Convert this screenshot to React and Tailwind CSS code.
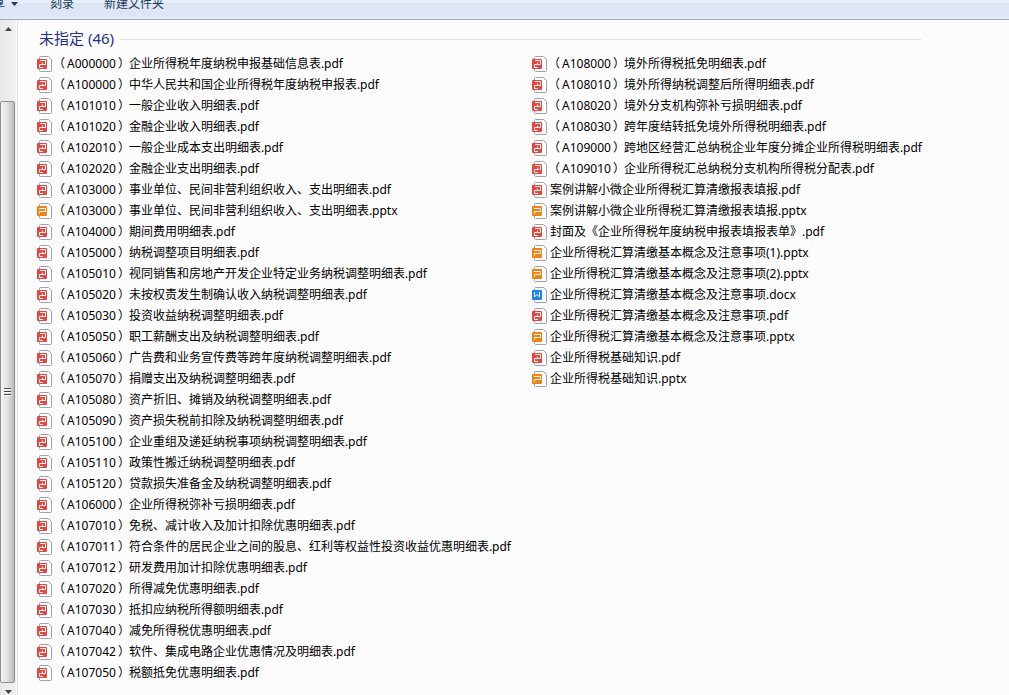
import { memo } from 'react'

const FILES = [
  { code: 'A000000', name: '企业所得税年度纳税申报基础信息表.pdf' },
  { code: 'A100000', name: '中华人民共和国企业所得税年度纳税申报表.pdf' },
  { code: 'A101010', name: '一般企业收入明细表.pdf' },
  { code: 'A101020', name: '金融企业收入明细表.pdf' },
  { code: 'A102010', name: '一般企业成本支出明细表.pdf' },
  { code: 'A102020', name: '金融企业支出明细表.pdf' },
  { code: 'A103000', name: '事业单位、民间非营利组织收入、支出明细表.pdf' },
  { code: 'A103000', name: '事业单位、民间非营利组织收入、支出明细表.pptx' },
  { code: 'A104000', name: '期间费用明细表.pdf' },
  { code: 'A105000', name: '纳税调整项目明细表.pdf' },
  { code: 'A105010', name: '视同销售和房地产开发企业特定业务纳税调整明细表.pdf' },
  { code: 'A105020', name: '未按权责发生制确认收入纳税调整明细表.pdf' },
  { code: 'A105030', name: '投资收益纳税调整明细表.pdf' },
  { code: 'A105050', name: '职工薪酬支出及纳税调整明细表.pdf' },
  { code: 'A105060', name: '广告费和业务宣传费等跨年度纳税调整明细表.pdf' },
  { code: 'A105070', name: '捐赠支出及纳税调整明细表.pdf' },
  { code: 'A105080', name: '资产折旧、摊销及纳税调整明细表.pdf' },
  { code: 'A105090', name: '资产损失税前扣除及纳税调整明细表.pdf' },
  { code: 'A105100', name: '企业重组及递延纳税事项纳税调整明细表.pdf' },
  { code: 'A105110', name: '政策性搬迁纳税调整明细表.pdf' },
  { code: 'A105120', name: '贷款损失准备金及纳税调整明细表.pdf' },
  { code: 'A106000', name: '企业所得税弥补亏损明细表.pdf' },
  { code: 'A107010', name: '免税、减计收入及加计扣除优惠明细表.pdf' },
  { code: 'A107011', name: '符合条件的居民企业之间的股息、红利等权益性投资收益优惠明细表.pdf' },
  { code: 'A107012', name: '研发费用加计扣除优惠明细表.pdf' },
  { code: 'A107020', name: '所得减免优惠明细表.pdf' },
  { code: 'A107030', name: '抵扣应纳税所得额明细表.pdf' },
  { code: 'A107040', name: '减免所得税优惠明细表.pdf' },
  { code: 'A107042', name: '软件、集成电路企业优惠情况及明细表.pdf' },
  { code: 'A107050', name: '税额抵免优惠明细表.pdf' },
  { code: 'A108000', name: '境外所得税抵免明细表.pdf' },
  { code: 'A108010', name: '境外所得纳税调整后所得明细表.pdf' },
  { code: 'A108020', name: '境外分支机构弥补亏损明细表.pdf' },
  { code: 'A108030', name: '跨年度结转抵免境外所得税明细表.pdf' },
  { code: 'A109000', name: '跨地区经营汇总纳税企业年度分摊企业所得税明细表.pdf' },
  { code: 'A109010', name: '企业所得税汇总纳税分支机构所得税分配表.pdf' },
  { name: '案例讲解小微企业所得税汇算清缴报表填报.pdf' },
  { name: '案例讲解小微企业所得税汇算清缴报表填报.pptx' },
  { name: '封面及《企业所得税年度纳税申报表填报表单》.pdf' },
  { name: '企业所得税汇算清缴基本概念及注意事项(1).pptx' },
  { name: '企业所得税汇算清缴基本概念及注意事项(2).pptx' },
  { name: '企业所得税汇算清缴基本概念及注意事项.docx' },
  { name: '企业所得税汇算清缴基本概念及注意事项.pdf' },
  { name: '企业所得税汇算清缴基本概念及注意事项.pptx' },
  { name: '企业所得税基础知识.pdf' },
  { name: '企业所得税基础知识.pptx' },
]

const BADGES = {
  pdf: { fill: '#ee4338', path: 'M3 4.5H8.5V8.5H5.5V6.5M6 8.5H2.5V11.5H6' },
  pptx: { fill: '#f7810f', path: 'M2 5.5H8.5V8.5H2.5V11' },
  docx: { fill: '#1e86f0', path: 'M2.5 5V10L5 7.5L7.5 10V5' },
}

// Sheet of paper with a coloured badge for the file type
const FileIcon = memo(function FileIcon({ type }) {
  const { fill, path } = BADGES[type]
  return (
    <svg className="size-4 shrink-0" viewBox="0 0 16 16" fill="none" aria-hidden="true">
      <path
        d="M3.5 .5H11.5L14.5 3.5V14.5Q14.5 15.5 13.5 15.5H3.5Q2.5 15.5 2.5 14.5V1.5Q2.5 .5 3.5 .5Z"
        fill="#fff"
        stroke="#9aa3b5"
      />
      <rect y="3" width="10" height="10" rx="1" fill={fill} />
      <path d={path} stroke="#fff" />
    </svg>
  )
})

function FileItem({ code, name }) {
  return (
    <li className="flex h-[21px] items-center gap-0.5 whitespace-nowrap">
      <FileIcon type={name.split('.').pop()} />
      <span>
        {code && (
          <>
            <span className="mr-0.5 -ml-0.5">（</span>
            {code}
            <span className="-mr-px ml-0.5">）</span>
          </>
        )}
        {name}
      </span>
    </li>
  )
}

function Toolbar() {
  return (
    <header className="h-5 shrink-0 overflow-hidden border-b border-[#a0a9c8] bg-linear-to-b from-[#e6f0fa] from-15% via-[#dce6f4] via-15% to-[#dce6f4]">
      {/* The bar is scrolled up, only its lower edge stays in view */}
      <div className="-mt-2.5 flex h-[29px] items-center border-b-2 border-[#e3edf8] text-[#1e395b]">
        <button type="button" className="-ml-[7px] flex items-center gap-1.5">
          享
          <svg className="h-1 w-[7px]" viewBox="0 0 7 4" aria-hidden="true">
            <path d="M0 0H7L3.5 4Z" fill="#1e395b" />
          </svg>
        </button>
        <button type="button" className="ml-8">刻录</button>
        <button type="button" className="ml-[30px]">新建文件夹</button>
      </div>
    </header>
  )
}

function ScrollBar() {
  return (
    <div className="flex w-4 shrink-0 flex-col bg-linear-to-r from-[#e8e8e8] to-[#f2f2f2]">
      <button type="button" aria-label="向上滚动" className="flex h-4 items-center justify-center pt-0.5">
        <svg className="h-1 w-[7px]" viewBox="0 0 7 4" aria-hidden="true">
          <path d="M0 4H7L3.5 0Z" fill="#444" />
        </svg>
      </button>
      <div className="flex flex-1 flex-col pt-[65px]">
        <div className="mr-px flex flex-1 flex-col items-center justify-center gap-px rounded-xs border border-[#8f8f8f] bg-linear-to-r from-[#f5f5f5] via-[#e2e2e4] to-[#bcbcc0]">
          <span className="h-0.5 w-[7px] border-t border-[#444] bg-white" />
          <span className="h-0.5 w-[7px] border-t border-[#444] bg-white" />
          <span className="h-0.5 w-[7px] border-t border-[#444] bg-white" />
        </div>
      </div>
      <button type="button" aria-label="向下滚动" className="flex h-3 items-end justify-center pb-px">
        <svg className="h-1 w-[7px]" viewBox="0 0 7 4" aria-hidden="true">
          <path d="M0 0H7L3.5 4Z" fill="#444" />
        </svg>
      </button>
    </div>
  )
}

export default function App() {
  return (
    <div
      lang="zh-CN"
      className="flex h-screen flex-col overflow-hidden bg-[#fcfcfc] font-['Noto_Sans','Noto_Sans_CJK_SC',sans-serif] text-xs text-black"
    >
      <Toolbar />
      <div className="flex min-h-0 flex-1">
        <ScrollBar />
        <main className="ml-px min-w-0 flex-1 overflow-hidden border-l border-[#d6e5f5] pt-2 pl-[19px]">
          <div className="ml-0.5 flex max-w-[882px] items-center gap-1.5">
            <h2 className="pb-0.5 text-[15px] leading-5 whitespace-nowrap text-[#1e3287]">未指定 (46)</h2>
            <hr className="flex-1 border-[#e0e0e0]" />
          </div>
          <ul className="mt-[3px] grid auto-cols-[495px] grid-flow-col grid-rows-[repeat(30,auto)]">
            {FILES.map((file, index) => (
              <FileItem key={index} {...file} />
            ))}
          </ul>
        </main>
      </div>
    </div>
  )
}
